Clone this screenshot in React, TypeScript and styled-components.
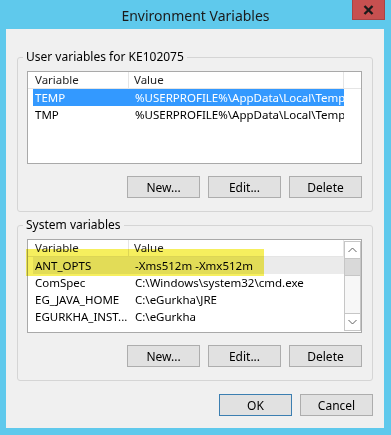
import React from 'react'
import styled, { createGlobalStyle } from 'styled-components'

interface Row {
  name: string
  value: string
}

interface ListProps {
  rows: Row[]
  selected?: number
  inactiveSelected?: number
  scrollbar?: boolean
  marked?: boolean
}

const GlobalStyle = createGlobalStyle`
  html, body {
    margin: 0;
    padding: 0;
    background: #5fc9ec;
  }
  body {
    font-family: 'Noto Sans', 'Segoe UI', sans-serif;
    font-size: 12px;
    color: #000000;
  }
`

const Window = styled.div`
  width: 391px;
  height: 435px;
  box-sizing: border-box;
  background: #5fc9ec;
  display: flex;
  flex-direction: column;
  padding: 0 7px 7px 6px;
`

const TitleBar = styled.div`
  height: 29px;
  display: grid;
  grid-template-columns: 1fr auto 1fr;
  align-items: center;
  margin-right: -1px;
`

const Title = styled.div`
  grid-column: 2;
  font-size: 14px;
  color: #1b1b1b;
  padding-top: 1px;
`

const CloseButton = styled.div`
  grid-column: 3;
  justify-self: end;
  align-self: start;
  width: 33px;
  height: 20px;
  box-sizing: border-box;
  background: #c75050;
  border: 1px solid #a84444;
  border-top: none;
  display: grid;
  place-items: center;
`

const Client = styled.div`
  flex: 1;
  background: #f0f0f0;
  padding: 20px 11px 0 11px;
  display: flex;
  flex-direction: column;
`

const Group = styled.fieldset<{ $gap: number }>`
  margin: ${(p) => p.$gap}px 0 0 0;
  padding: 6px 10px 13px 9px;
  border: 1px solid #d5d5d5;
  border-radius: 3px;
  min-inline-size: 0;
  display: flex;
  flex-direction: column;
`

const Legend = styled.legend`
  margin-left: -4px;
  padding: 0 3px;
  line-height: 16px;
  color: #000000;
`

const ListView = styled.div<{ $height: number }>`
  position: relative;
  height: ${(p) => p.$height}px;
  box-sizing: border-box;
  border: 1px solid #a9a9a9;
  background: #ffffff;
  display: flex;
  font-size: 11.5px;
`

const ListBody = styled.div`
  flex: 1;
  display: flex;
  flex-direction: column;
`

const Header = styled.div`
  display: grid;
  grid-template-columns: 101px 215px 1fr;
  height: 17px;
  border-bottom: 1px solid #e5e5e5;
  box-sizing: border-box;
`

const HeaderCell = styled.div<{ $pad: number }>`
  padding-left: ${(p) => p.$pad}px;
  border-right: 1px solid #e5e5e5;
  line-height: 16px;
  color: #1e1e1e;
  white-space: nowrap;
  overflow: hidden;
`

const HeaderFill = styled.div``

const ItemRow = styled.div<{ $state: 'none' | 'active' | 'inactive' }>`
  display: grid;
  grid-template-columns: 96px 215px;
  width: 311px;
  margin-left: 5px;
  height: 17px;
  line-height: 17px;
  background: ${(p) =>
    p.$state === 'active' ? '#3399ff' : p.$state === 'inactive' ? '#ebebeb' : 'transparent'};
  color: ${(p) => (p.$state === 'active' ? '#ffffff' : '#000000')};
`

const Cell = styled.div<{ $pad: number }>`
  padding-left: ${(p) => p.$pad}px;
  white-space: nowrap;
  overflow: hidden;
`

const Scrollbar = styled.div`
  width: 17px;
  margin: 1px 0 1px 0;
  box-sizing: border-box;
  border: 1px solid #c6c6c6;
  display: flex;
  flex-direction: column;
  background: #f7f7f7;
`

const ArrowBox = styled.div<{ $edge: 'top' | 'bottom' }>`
  height: 16px;
  display: grid;
  place-items: center;
  background: #ffffff;
  ${(p) => (p.$edge === 'top' ? 'border-bottom' : 'border-top')}: 1px solid #c6c6c6;
`

const Thumb = styled.div`
  height: 17px;
  box-sizing: border-box;
  background: #d9d9d9;
  border-bottom: 1px solid #c6c6c6;
`

const Track = styled.div`
  flex: 1;
`

const Marker = styled.div`
  position: absolute;
  left: -2px;
  top: 9px;
  width: 238px;
  height: 27px;
  background: #f6ef5e;
  mix-blend-mode: multiply;
  pointer-events: none;
`

const ButtonRow = styled.div<{ $top: number }>`
  display: flex;
  justify-content: flex-end;
  gap: 8px;
  margin-top: ${(p) => p.$top}px;
`

const Button = styled.button<{ $default?: boolean }>`
  width: 73px;
  height: 22px;
  box-sizing: border-box;
  background: #e1e1e1;
  border: 1px solid ${(p) => (p.$default ? '#3c7fb1' : '#adadad')};
  font-family: inherit;
  font-size: 12px;
  color: #000000;
  padding: 0;
`

const Chevron = ({ up }: { up: boolean }) => (
  <svg width="9" height="6" viewBox="0 0 9 6">
    <polyline
      points={up ? '0.5,5 4.5,1 8.5,5' : '0.5,1 4.5,5 8.5,1'}
      fill="none"
      stroke="#606060"
      strokeWidth="1"
    />
  </svg>
)

const VariableList = ({ rows, selected, inactiveSelected, scrollbar, marked }: ListProps) => (
  <ListView $height={scrollbar ? 94 : 93}>
    <ListBody>
      <Header>
        <HeaderCell $pad={7}>Variable</HeaderCell>
        <HeaderCell $pad={5}>Value</HeaderCell>
        {!scrollbar && <HeaderFill />}
      </Header>
      {rows.map((row, i) => (
        <ItemRow
          key={row.name}
          $state={i === selected ? 'active' : i === inactiveSelected ? 'inactive' : 'none'}
        >
          <Cell $pad={2}>{row.name}</Cell>
          <Cell $pad={6}>{row.value}</Cell>
        </ItemRow>
      ))}
    </ListBody>
    {scrollbar && (
      <Scrollbar>
        <ArrowBox $edge="top">
          <Chevron up />
        </ArrowBox>
        <Thumb />
        <Track />
        <ArrowBox $edge="bottom">
          <Chevron up={false} />
        </ArrowBox>
      </Scrollbar>
    )}
    {marked && <Marker />}
  </ListView>
)

const userRows: Row[] = [
  { name: 'TEMP', value: '%USERPROFILE%\\AppData\\Local\\Temp' },
  { name: 'TMP', value: '%USERPROFILE%\\AppData\\Local\\Temp' },
]

const systemRows: Row[] = [
  { name: 'ANT_OPTS', value: '-Xms512m -Xmx512m' },
  { name: 'ComSpec', value: 'C:\\Windows\\system32\\cmd.exe' },
  { name: 'EG_JAVA_HOME', value: 'C:\\eGurkha\\JRE' },
  { name: 'EGURKHA_INST...', value: 'C:\\eGurkha' },
]

const App = () => {
  return (
    <>
      <GlobalStyle />
      <Window>
        <TitleBar>
          <Title>Environment Variables</Title>
          <CloseButton>
            <svg width="11" height="10" viewBox="0 0 11 10">
              <path d="M1.5 1 L9.5 9 M9.5 1 L1.5 9" stroke="#1a1a1a" strokeWidth="2.4" />
            </svg>
          </CloseButton>
        </TitleBar>
        <Client>
          <Group $gap={0}>
            <Legend>User variables for KE102075</Legend>
            <VariableList rows={userRows} selected={0} />
            <ButtonRow $top={12}>
              <Button>New...</Button>
              <Button>Edit...</Button>
              <Button>Delete</Button>
            </ButtonRow>
          </Group>
          <Group $gap={5}>
            <Legend>System variables</Legend>
            <VariableList rows={systemRows} inactiveSelected={0} scrollbar marked />
            <ButtonRow $top={12}>
              <Button>New...</Button>
              <Button>Edit...</Button>
              <Button>Delete</Button>
            </ButtonRow>
          </Group>
          <ButtonRow $top={13}>
            <Button $default>OK</Button>
            <Button>Cancel</Button>
          </ButtonRow>
        </Client>
      </Window>
    </>
  )
}

export default App
